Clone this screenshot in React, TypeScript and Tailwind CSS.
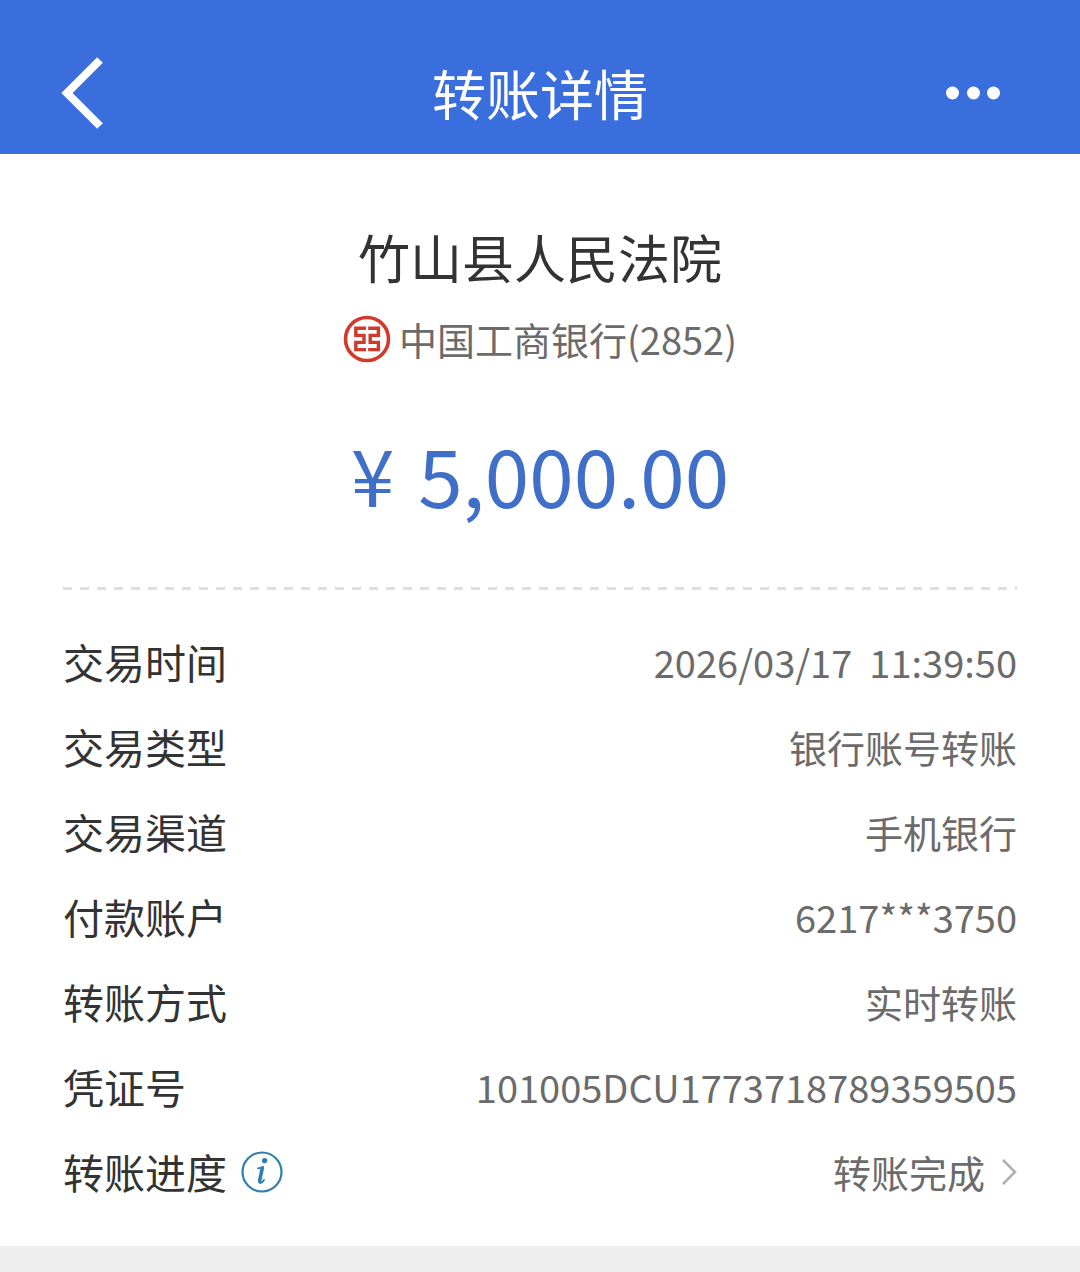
import type { ReactNode } from "react";

type Detail = {
  label: string;
  value: string;
};

const details: Detail[] = [
  { label: "交易时间", value: "2026/03/17  11:39:50" },
  { label: "交易类型", value: "银行账号转账" },
  { label: "交易渠道", value: "手机银行" },
  { label: "付款账户", value: "6217***3750" },
  { label: "转账方式", value: "实时转账" },
  { label: "凭证号", value: "101005DCU1773718789359505" },
];

function BankLogo() {
  return (
    <svg width="48" height="48" viewBox="0 0 48 48" fill="none" stroke="#d0392b" aria-hidden="true">
      <circle cx="24" cy="24" r="21.5" strokeWidth="3.6" />
      <g strokeWidth="3.4">
        <path d="M23 13.200H12.800V20.400H21V27.400H12.800V34.600H23" />
        <path d="M25.200 13.200H35.400V20.400H27.200V27.400H35.400V34.600H25.200" />
      </g>
    </svg>
  );
}

function InfoIcon() {
  return (
    <svg width="42" height="42" viewBox="0 0 42 42" fill="none" stroke="#2e7fae" aria-hidden="true">
      <circle cx="21" cy="21" r="19.5" strokeWidth="2.2" />
      <circle cx="23.6" cy="9.6" r="2.7" fill="#2e7fae" stroke="none" />
      <path
        d="M17 17.400C19 17.200 20.500 16.600 22 15.800L18.500 29.500C18 32 19.200 32.500 20.600 31.600C21.700 30.900 22.400 30 23 29"
        strokeWidth="1.8"
        strokeLinecap="round"
        strokeLinejoin="round"
      />
      <path d="M21.200 17.500L18.600 30" strokeWidth="3.6" strokeLinecap="round" />
    </svg>
  );
}

function Row({ label, children }: { label: ReactNode; children: ReactNode }) {
  return (
    <div className="flex h-[85px] items-center justify-between">
      <dt className="flex items-center gap-3.5 text-[41px] text-[#333333]">{label}</dt>
      <dd className="text-[38px] whitespace-pre text-[#6b6b6b]">{children}</dd>
    </div>
  );
}

export default function App() {
  return (
    <div className="min-h-screen bg-[#eeeeee] font-['Noto_Sans_CJK_SC',sans-serif] leading-none">
      <header className="grid h-[154px] grid-cols-3 items-center bg-[#3a6edc] px-[60px] pt-8 text-white">
        <button type="button" aria-label="返回" className="justify-self-start">
          <svg width="46" height="76" viewBox="0 0 46 76" fill="none" stroke="currentColor" strokeWidth="8">
            <path d="M40 5L7 38L40 71" />
          </svg>
        </button>
        <h1 className="text-center text-[54px] whitespace-nowrap">转账详情</h1>
        <button type="button" aria-label="更多" className="justify-self-end pr-5">
          <svg width="54" height="14" viewBox="0 0 54 14" fill="currentColor">
            <circle cx="6.500" cy="7" r="6.500" />
            <circle cx="27.500" cy="7" r="6.500" />
            <circle cx="47.500" cy="7" r="6.500" />
          </svg>
        </button>
      </header>

      <main className="bg-white px-[63px] pb-8">
        <section className="flex flex-col items-center pt-[77px]">
          <h2 className="text-[52px] text-[#333333]">竹山县人民法院</h2>
          <p className="mt-8 flex items-center gap-2 text-[38px] text-[#6b6b6b]">
            <BankLogo />
            中国工商银行(2852)
          </p>
          <p className="mt-[70px] flex items-center gap-6 text-[#3f6fc8]">
            <span className="text-[78px]">¥</span>
            <span className="text-[80px]">5,000.00</span>
          </p>
        </section>

        <div className="mt-[74px] h-[3px] bg-[repeating-linear-gradient(90deg,#dedede_0_9px,transparent_9px_17px)]" />

        <dl className="mt-[29px]">
          {details.map((item) => (
            <Row key={item.label} label={item.label}>
              {item.value}
            </Row>
          ))}
          <Row
            label={
              <>
                转账进度
                <button type="button" aria-label="进度说明">
                  <InfoIcon />
                </button>
              </>
            }
          >
            <button type="button" className="flex items-center gap-4">
              转账完成
              <svg width="16" height="26" viewBox="0 0 16 26" fill="none" stroke="#b0b0b0" strokeWidth="2.500">
                <path d="M2 1L14 13L2 25" />
              </svg>
            </button>
          </Row>
        </dl>
      </main>
    </div>
  );
}
